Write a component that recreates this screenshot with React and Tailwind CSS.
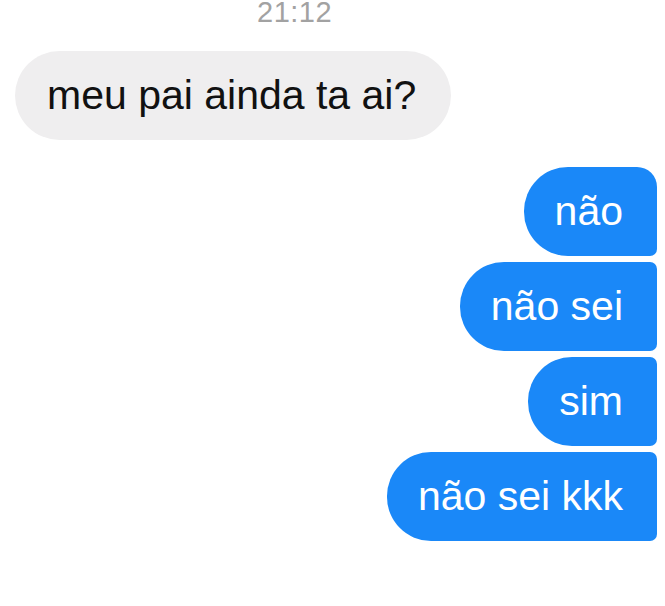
import React from 'react';

const sent = [
  { text: 'não', first: true },
  { text: 'não sei' },
  { text: 'sim' },
  { text: 'não sei kkk' },
];

const App = () => {
  return (
    <div
      className="w-[665px] h-[606px] bg-white overflow-hidden flex flex-col"
      style={{ fontFamily: '"Liberation Sans", Arial, sans-serif' }}
    >
      {/* Timestamp */}
      <div className="h-[24px] pl-[257px] text-[29px] leading-[25px] tracking-[0.5px] text-[#a2a2a2]">
        21:12
      </div>

      {/* Received */}
      <div className="mt-[27px] pl-[15px] flex">
        <div className="h-[89px] flex items-center rounded-[45px] bg-[#efeeef] pl-[32px] pr-[35px] text-[41px] leading-none text-[#111]">
          meu pai ainda ta ai?
        </div>
      </div>

      {/* Sent */}
      <div className="mt-[27px] pr-[8px] flex flex-col items-end gap-[6px]">
        {sent.map((m) => (
          <div
            key={m.text}
            className={
              'h-[89px] flex items-center bg-[#1a88f8] text-white text-[41px] leading-none pl-[31px] pr-[34px] rounded-l-[44px] rounded-br-[7px] ' +
              (m.first ? 'rounded-tr-[20px]' : 'rounded-tr-[7px]')
            }
          >
            {m.text}
          </div>
        ))}
      </div>
    </div>
  );
};

export default App;
